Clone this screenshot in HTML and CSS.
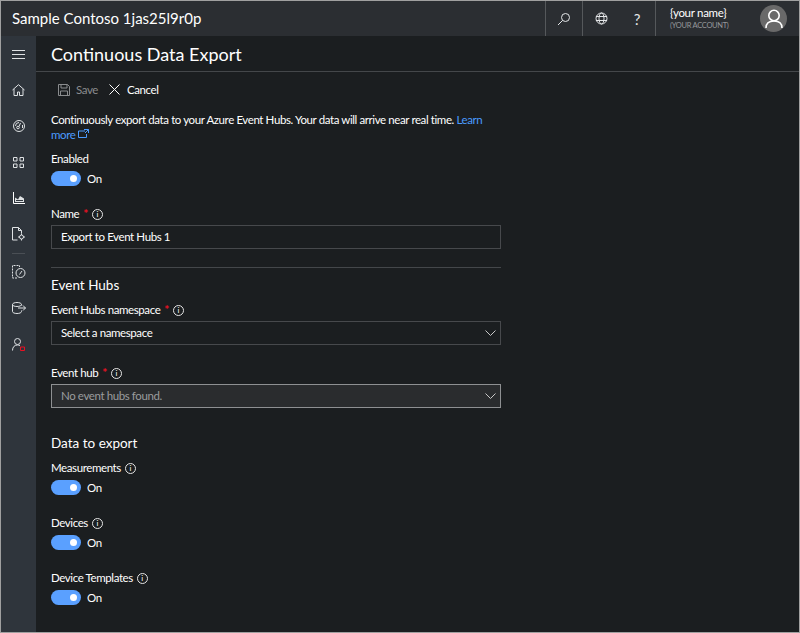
FILE: index.html
```html
<!DOCTYPE html>
<html lang="en">
<head>
    <meta charset="UTF-8">
    <meta name="viewport" content="width=device-width, initial-scale=1.0">
    <title>Continuous Data Export</title>
    <link rel="stylesheet" href="styles.css">
</head>
<body>
    <div class="window">
        <header class="topbar">
            <div class="app-name">Sample Contoso 1jas25l9r0p</div>
            <div class="top-action top-search">
                <svg class="icon" width="14" height="14" viewBox="0 0 14 14"><circle cx="8.500" cy="5.500" r="4" /><path d="M5.500 8.500 1 13" /></svg>
            </div>
            <div class="top-action top-globe">
                <svg class="icon" width="13" height="13" viewBox="0 0 13 13"><circle cx="6.500" cy="6.500" r="5.500" /><ellipse cx="6.500" cy="6.500" rx="2.500" ry="5.500" /><path d="M1 4.500h11M1 8.500h11" /></svg>
            </div>
            <div class="top-action top-help">?</div>
            <div class="account">
                <div class="account-text">
                    <div class="account-name">{your name}</div>
                    <div class="account-sub">(YOUR ACCOUNT)</div>
                </div>
                <div class="avatar">
                    <svg class="icon avatar-icon" width="18" height="20" viewBox="0 0 18 20"><circle cx="9" cy="6.500" r="5.200" /><path d="M1 19c0-4.500 3-7 8-7s8 2.500 8 7" /></svg>
                </div>
            </div>
        </header>

        <div class="layout">
            <nav class="sidebar">
                <div class="nav-item nav-menu">
                    <svg class="icon" width="13" height="9" viewBox="0 0 13 9"><path d="M0 .5h13M0 4.500h13M0 8.500h13" /></svg>
                </div>
                <div class="nav-item">
                    <svg class="icon" width="13" height="12" viewBox="0 0 13 12"><path d="M.5 6 6.500.7l6 5.300M2 5v6.500h3.500V8h2v3.500H11V5" /></svg>
                </div>
                <div class="nav-item">
                    <svg class="icon" width="12" height="12" viewBox="0 0 12 12"><circle cx="6" cy="6" r="5.500" /><circle cx="5" cy="7.500" r="1.300" /><path d="M6 6.500 7.500 3M2.500 6a3.500 3.500 0 0 1 3.500-3.500M9.500 5v3" /></svg>
                </div>
                <div class="nav-item">
                    <svg class="icon" width="11" height="11" viewBox="0 0 11 11"><path d="M.5.500h3.500v3.500H.5zM7 .5h3.500v3.500H7zM.5 7h3.500v3.500H.5zM7 7h3.500v3.500H7z" /></svg>
                </div>
                <div class="nav-item nav-active">
                    <svg class="icon" width="12" height="12" viewBox="0 0 12 12"><path d="M.5 0v11.500H12" /><path class="icon-fill" d="M2 10V5.500l3 2 2-3.500 4 2.500V10z" /><path class="icon-cut" d="M3 8.500h7" /></svg>
                </div>
                <div class="nav-item">
                    <svg class="icon" width="13" height="14" viewBox="0 0 13 14"><path d="M5.500 13H.5V.5h6l3 3v3M6.500.5v3h3" /><circle cx="9.500" cy="10" r="2" /><path d="M9.500 6.500V8M9.500 12v1.500M6 10h1.500M11.500 10H13" /></svg>
                </div>
                <div class="nav-sep"></div>
                <div class="nav-item">
                    <svg class="icon" width="14" height="14" viewBox="0 0 14 14"><path stroke-dasharray="2 1" d="M5 13H.5V.5h7V2" /><circle cx="8.500" cy="8" r="4.500" /><path d="M7.500 9.500 10 6" /></svg>
                </div>
                <div class="nav-item">
                    <svg class="icon" width="14" height="12" viewBox="0 0 14 12"><path d="M9.500 3.500v-1C9.500 1.300 7.500.5 5 .5S.5 1.300.5 2.500v7c0 1.200 2 2 4.500 2s4.500-.8 4.500-2v-1M.5 2.500c0 1.200 2 2 4.500 2s4.500-.8 4.500-2M6 6h7.500M11 3.500 13.500 6 11 8.500" /></svg>
                </div>
                <div class="nav-item">
                    <svg class="icon" width="13" height="13" viewBox="0 0 13 13"><circle cx="5.500" cy="3.500" r="3" /><path d="M.5 12.500c0-3.500 2-5.500 5-5.500 1 0 1.800.2 2.500.6" /><path class="icon-red" d="M8.500 9h4v3.500h-4z" /></svg>
                </div>
            </nav>

            <main class="content">
                <h1 class="page-title">Continuous Data Export</h1>

                <div class="toolbar">
                    <span class="tool tool-disabled">
                        <svg class="icon" width="12" height="12" viewBox="0 0 12 12"><path d="M.5.500h9l2 2v9H.5zM3 .5v3.500h6V.5M2.500 11.500V7h7v4.500" /></svg>
                        Save
                    </span>
                    <span class="tool tool-cancel">
                        <svg class="icon" width="11" height="11" viewBox="0 0 11 11"><path d="M.5.500l10 10M10.500.5l-10 10" /></svg>
                        Cancel
                    </span>
                </div>

                <div class="form">
                    <p class="intro">Continuously export data to your Azure Event Hubs. Your data will arrive near real time. <a href="#">Learn more <svg class="icon link-icon" width="11" height="9" viewBox="0 0 11 9"><path d="M7 2H.5v6.500h8V5M6 .5h4.500V4M10.500.5 7 4" /></svg></a></p>

                    <div class="field field-enabled">
                        <div class="label">Enabled</div>
                        <div class="switch"><span class="track"><span class="knob"></span></span>On</div>
                    </div>

                    <div class="field field-name">
                        <div class="label">Name <span class="req">*</span> <span class="info">i</span></div>
                        <div class="input">Export to Event Hubs 1</div>
                    </div>

                    <hr class="divider">

                    <h2 class="section-title">Event Hubs</h2>

                    <div class="field field-ns">
                        <div class="label">Event Hubs namespace <span class="req">*</span> <span class="info">i</span></div>
                        <div class="input select">Select a namespace
                            <svg class="icon chevron" width="11" height="6" viewBox="0 0 11 6"><path d="M.5.500l5 5 5-5" /></svg>
                        </div>
                    </div>

                    <div class="field field-hub">
                        <div class="label">Event hub <span class="req">*</span> <span class="info">i</span></div>
                        <div class="input select select-disabled">No event hubs found.
                            <svg class="icon chevron" width="11" height="6" viewBox="0 0 11 6"><path d="M.5.500l5 5 5-5" /></svg>
                        </div>
                    </div>

                    <h2 class="section-title section-data">Data to export</h2>

                    <div class="field field-toggle-first">
                        <div class="label">Measurements <span class="info">i</span></div>
                        <div class="switch"><span class="track"><span class="knob"></span></span>On</div>
                    </div>
                    <div class="field field-toggle">
                        <div class="label">Devices <span class="info">i</span></div>
                        <div class="switch"><span class="track"><span class="knob"></span></span>On</div>
                    </div>
                    <div class="field field-toggle">
                        <div class="label">Device Templates <span class="info">i</span></div>
                        <div class="switch"><span class="track"><span class="knob"></span></span>On</div>
                    </div>
                </div>
            </main>
        </div>
    </div>
</body>
</html>
```

FILE: styles.css
```css
html, body {
    margin: 0;
    padding: 0;
    height: 100%;
}

body {
    font-family: 'Lato', 'Open Sans', sans-serif;
    font-size: 11.5px;
    letter-spacing: -0.4px;
    color: #fff;
    background: #a0a0a0;
    overflow: hidden;
}

.window {
    box-sizing: border-box;
    height: 633px;
    border: 1px solid #a0a0a0;
    display: flex;
    flex-direction: column;
}

.icon {
    fill: none;
    stroke: currentColor;
    stroke-width: 1;
    flex: none;
}

/* Top bar */
.topbar {
    height: 35px;
    flex: none;
    display: flex;
    align-items: stretch;
    background: #2b2e32;
}

.app-name {
    flex: 1;
    padding-left: 11px;
    font-size: 15px;
    line-height: 35px;
    letter-spacing: 0;
}

.top-action {
    display: flex;
    align-items: center;
    justify-content: center;
    color: #e4e6e8;
}

.top-search {
    width: 37px;
    box-sizing: border-box;
    border-left: 1px solid #55585b;
}

.top-globe {
    width: 37px;
    box-sizing: border-box;
    border-left: 1px solid #55585b;
}

.top-help {
    width: 36px;
    font-size: 15px;
}

.account {
    width: 144px;
    box-sizing: border-box;
    border-left: 1px solid #55585b;
    display: flex;
    align-items: center;
    justify-content: space-between;
    padding: 0 12px 0 14px;
}

.account-name {
    line-height: 14px;
    letter-spacing: -0.3px;
}

.account-sub {
    font-size: 7.5px;
    line-height: 11px;
    letter-spacing: -0.3px;
    color: #96999c;
}

.avatar {
    width: 27px;
    height: 27px;
    border-radius: 50%;
    background: #696969;
    display: flex;
    align-items: center;
    justify-content: center;
}

.avatar-icon {
    color: #fff;
    stroke-width: 1.6;
}

/* Sidebar */
.layout {
    flex: 1;
    display: flex;
    min-height: 0;
}

.sidebar {
    width: 35px;
    flex: none;
    background: #2f353c;
    color: #dfe2e4;
}

.nav-item {
    height: 36px;
    display: flex;
    align-items: center;
    justify-content: center;
}

.nav-active {
    color: #fff;
}

.icon-fill {
    fill: #dfe2e4;
    stroke: none;
}

.icon-cut {
    stroke: #2f353c;
}

.icon-red {
    stroke: #e81123;
}

.nav-sep {
    width: 13px;
    height: 1px;
    margin: 1px auto 0;
    background: #4a4f55;
}

/* Main */
.content {
    flex: 1;
    background: #1b1e20;
}

.page-title {
    margin: 0;
    height: 35px;
    padding-left: 15px;
    font-size: 18px;
    font-weight: 400;
    line-height: 37px;
    letter-spacing: 0;
    border-bottom: 1px solid #44474a;
}

.toolbar {
    height: 35px;
    display: flex;
    align-items: center;
    gap: 11px;
    padding-left: 22px;
}

.tool {
    display: flex;
    align-items: center;
    gap: 6px;
}

.tool-cancel {
    gap: 7px;
}

.tool-disabled {
    color: #8a8c8e;
}

.form {
    width: 450px;
    padding-left: 15px;
}

.intro {
    margin: 5px 0 0;
    line-height: 15px;
}

.intro a {
    color: #4a9bff;
    text-decoration: none;
}

.link-icon {
    vertical-align: 1px;
}

.label {
    height: 16px;
    line-height: 16px;
    display: flex;
    align-items: center;
    gap: 4px;
}

.req {
    color: #e81123;
    font-size: 12px;
    font-weight: 700;
}

.info {
    box-sizing: border-box;
    width: 11px;
    height: 11px;
    border: 1px solid #e6e6e6;
    border-radius: 50%;
    font-size: 8px;
    line-height: 9px;
    letter-spacing: 0;
    text-align: center;
}

.switch {
    display: flex;
    align-items: center;
    gap: 6px;
    height: 15px;
    margin-top: 4px;
}

.track {
    width: 30px;
    height: 15px;
    border-radius: 8px;
    background: #5aa0ff;
    display: flex;
    align-items: center;
    justify-content: flex-end;
    padding-right: 4px;
    box-sizing: border-box;
}

.knob {
    width: 7px;
    height: 7px;
    border-radius: 50%;
    background: #fff;
}

.input {
    box-sizing: border-box;
    height: 24px;
    margin-top: 3px;
    padding: 0 9px;
    border: 1px solid #47494c;
    line-height: 22px;
}

.select {
    display: flex;
    align-items: center;
    justify-content: space-between;
    padding-right: 4px;
}

.chevron {
    color: #c8c8c8;
}

.select-disabled {
    background: #2a2c2e;
    border-color: #8e9092;
    color: #9a9c9e;
}

.divider {
    height: 1px;
    margin: 18px 0 0;
    border: 0;
    background: #44474a;
}

.section-title {
    margin: 7px 0 0;
    font-size: 13.5px;
    font-weight: 400;
    line-height: 20px;
    letter-spacing: 0;
}

.field-enabled {
    margin-top: 9px;
}

.field-name {
    margin-top: 20px;
}

.field-ns {
    margin-top: 7px;
}

.field-hub {
    margin-top: 20px;
}

.section-data {
    margin-top: 25px;
}

.field-toggle-first {
    margin-top: 7px;
}

.field-toggle {
    margin-top: 20px;
}
```
